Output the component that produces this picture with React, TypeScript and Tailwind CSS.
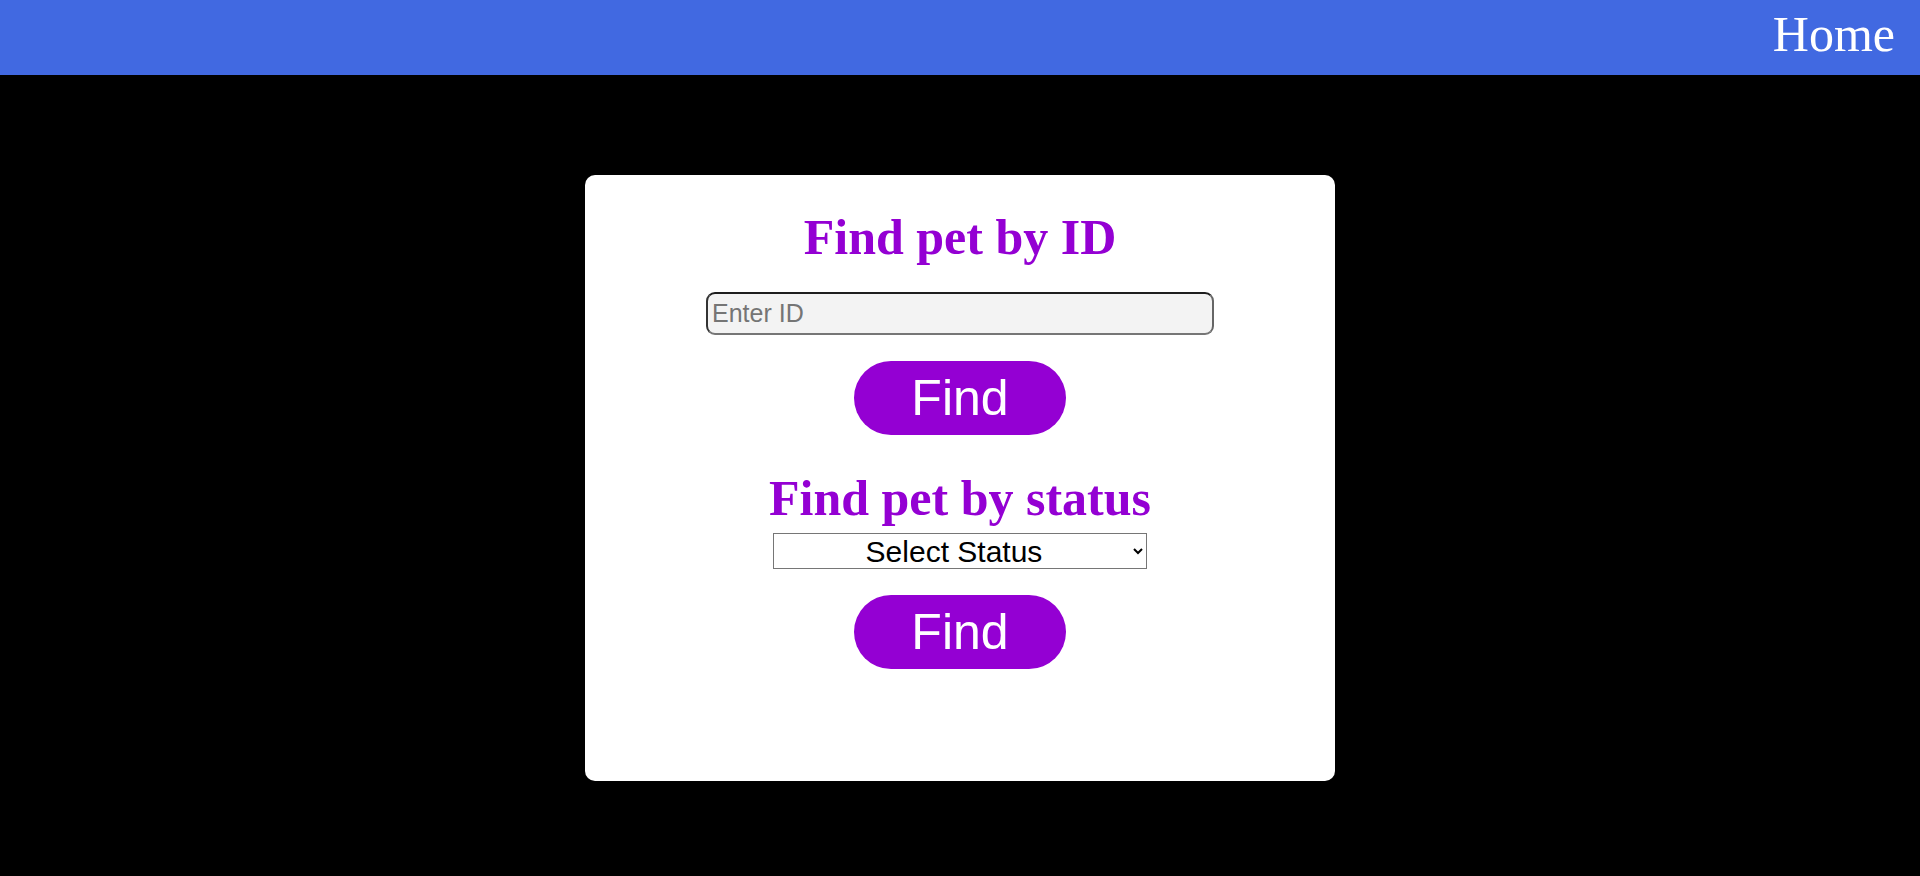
import { FC, useState } from 'react';

const serif = "font-['Liberation_Serif','Times_New_Roman',serif]";
const sans = "font-['Liberation_Sans',Arial,sans-serif]";

const FindButton: FC<{ onClick?: () => void }> = ({ onClick }) => (
  <button
    onClick={onClick}
    className={`${sans} mt-[26px] h-[74px] w-[212px] rounded-full bg-[#9400d3] text-[50px] leading-[57px] text-white`}
  >
    Find
  </button>
);

const App: FC = () => {
  const [petId, setPetId] = useState('');
  const [status, setStatus] = useState('');

  return (
    <div className="min-h-[876px] w-full bg-black">
      {/* Top bar */}
      <header className="flex h-[75px] items-start justify-end bg-[#4169e1] pr-[25px] pt-[6px]">
        <a href="#" className={`${serif} text-[50px] leading-[57px] text-white`}>
          Home
        </a>
      </header>

      {/* Search card */}
      <div className="flex justify-center pt-[100px]">
        <div className="flex h-[606px] w-[750px] flex-col items-center rounded-[10px] bg-white pt-[34px]">
          <h1 className={`${serif} text-[50px] font-bold leading-[57px] text-[#9400d3]`}>Find pet by ID</h1>
          <input
            type="text"
            value={petId}
            onChange={(e) => setPetId(e.target.value)}
            placeholder="Enter ID"
            className={`${sans} mt-[26px] h-[43px] w-[508px] rounded-[9px] border-2 border-b-[#767676] border-l-[#333] border-r-[#666] border-t-[#1e1e1e] bg-[#f3f3f3] px-[4px] text-[25px] text-black outline-none placeholder:text-[#757575]`}
          />
          <FindButton />

          <h1 className={`${serif} mt-[35px] text-[50px] font-bold leading-[57px] text-[#9400d3]`}>
            Find pet by status
          </h1>
          <select
            value={status}
            onChange={(e) => setStatus(e.target.value)}
            className={`${sans} mt-[6px] h-[36px] w-[374px] border border-[#767676] bg-white text-center text-[30px] leading-[34px] text-black [text-align-last:center]`}
          >
            <option value="">Select Status</option>
            <option value="available">available</option>
            <option value="pending">pending</option>
            <option value="sold">sold</option>
          </select>
          <FindButton />
        </div>
      </div>
    </div>
  );
};

export default App;
